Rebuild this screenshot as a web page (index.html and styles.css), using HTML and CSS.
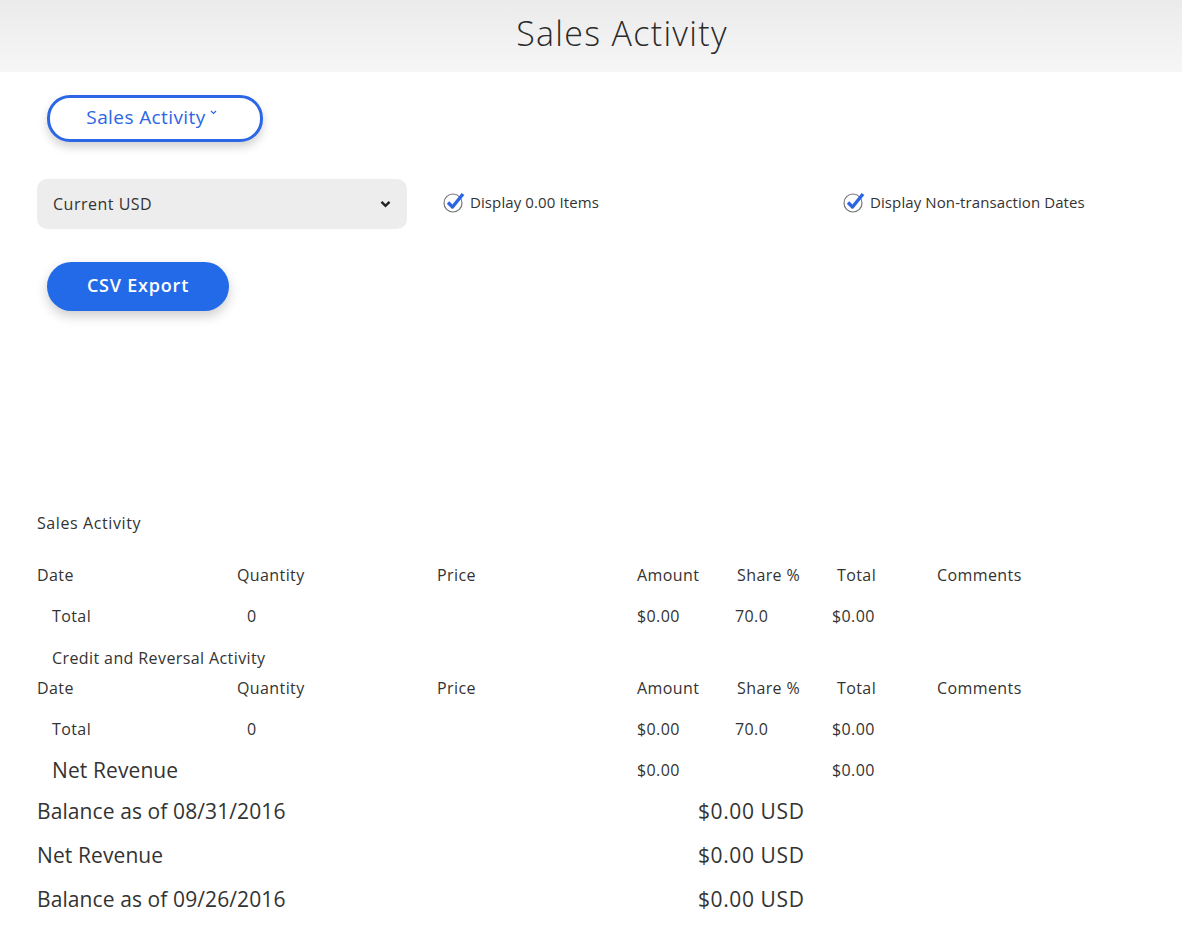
FILE: index.html
```html
<!DOCTYPE html>
<html>
<head>
<meta charset="utf-8">
<link rel="stylesheet" href="styles.css">
</head>
<body>
<header class="topbar"><h1 class="title">Sales Activity</h1></header>
<main class="content">
  <button class="view-btn">Sales Activity <svg class="caret" width="7" height="5" viewBox="0 0 7 5"><path d="M1 1l2.5 2.5L6 1" fill="none" stroke="#2a66e6" stroke-width="1.2"/></svg></button>
  <div class="controls">
    <div class="select"><span>Current USD</span><svg width="11" height="8" viewBox="0 0 11 8"><path d="M1.5 1.8l4 4 4-4" fill="none" stroke="#222" stroke-width="2.4"/></svg></div>
    <label class="check"><svg width="26" height="22" viewBox="0 0 26 22"><circle cx="11" cy="12" r="9" fill="#fff" stroke="#777" stroke-width="1.2"/><path d="M6 11.5l4.5 4.5L21 3" fill="none" stroke="#2a66e6" stroke-width="3.4" stroke-linejoin="round"/></svg><span>Display 0.00 Items</span></label>
    <label class="check"><svg width="26" height="22" viewBox="0 0 26 22"><circle cx="11" cy="12" r="9" fill="#fff" stroke="#777" stroke-width="1.2"/><path d="M6 11.5l4.5 4.5L21 3" fill="none" stroke="#2a66e6" stroke-width="3.4" stroke-linejoin="round"/></svg><span>Display Non-transaction Dates</span></label>
  </div>
  <button class="csv-btn">CSV Export</button>

  <section class="report">
    <div class="section-label">Sales Activity</div>
    <div class="row head first-head">
      <span>Date</span><span>Quantity</span><span>Price</span><span>Amount</span><span>Share %</span><span>Total</span><span>Comments</span>
    </div>
    <div class="row total">
      <span class="ind">Total</span><span class="qty">0</span><span></span><span>$0.00</span><span class="share">70.0</span><span class="tot">$0.00</span><span></span>
    </div>
    <div class="sub-label">Credit and Reversal Activity</div>
    <div class="row head">
      <span>Date</span><span>Quantity</span><span>Price</span><span>Amount</span><span>Share %</span><span>Total</span><span>Comments</span>
    </div>
    <div class="row total second-total">
      <span class="ind">Total</span><span class="qty">0</span><span></span><span>$0.00</span><span class="share">70.0</span><span class="tot">$0.00</span><span></span>
    </div>
    <div class="row net">
      <span class="ind net-label">Net Revenue</span><span></span><span></span><span>$0.00</span><span></span><span class="tot">$0.00</span><span></span>
    </div>
    <div class="balance"><span>Balance as of 08/31/2016</span><span class="usd">$0.00 USD</span></div>
    <div class="balance"><span>Net Revenue</span><span class="usd">$0.00 USD</span></div>
    <div class="balance"><span>Balance as of 09/26/2016</span><span class="usd">$0.00 USD</span></div>
  </section>
</main>
</body>
</html>
```
FILE: styles.css
```css
* { box-sizing: border-box; }
body {
  margin: 0;
  font-family: "Open Sans", "Lato", sans-serif;
  color: #333;
  background: #fff;
}
.topbar {
  height: 72px;
  background: linear-gradient(#ebebeb, #f6f6f6);
  display: flex;
  justify-content: center;
  align-items: center;
  padding-left: 62px;
}
.title {
  margin: 0 0 6px;
  font-weight: 300;
  font-size: 34px;
  color: #2b2b2b;
  letter-spacing: 1.3px;
}
.content {
  padding: 23px 0 0 37px;
}
.view-btn {
  margin-left: 10px;
  width: 216px;
  height: 47px;
  border: 3px solid #2a66e6;
  border-radius: 23px;
  background: #fff;
  color: #2a66e6;
  font-family: inherit;
  font-size: 19px;
  letter-spacing: 0.4px;
  box-shadow: 0 5px 10px rgba(0,0,0,0.18);
  display: flex;
  align-items: center;
  justify-content: center;
  gap: 4px;
  padding: 0 7px 4px 0;
}
.caret { margin-bottom: 8px; }
.controls {
  margin-top: 37px;
  display: grid;
  grid-template-columns: 370px 365px auto;
  column-gap: 35px;
  align-items: center;
}
.select {
  height: 50px;
  background: #ededed;
  border-radius: 10px;
  display: flex;
  align-items: center;
  justify-content: space-between;
  padding: 0 16px 0 16px;
  font-size: 16px;
  letter-spacing: 0.5px;
  color: #333;
}
.check {
  display: flex;
  align-items: center;
  gap: 2px;
  font-size: 15px;
  letter-spacing: 0.1px;
  color: #333;
  margin-top: -4px;
}
.csv-btn {
  margin: 33px 0 0 10px;
  width: 182px;
  height: 49px;
  border: none;
  border-radius: 25px;
  background: #236ae9;
  color: #fff;
  font-family: inherit;
  font-size: 18px;
  font-weight: 600;
  letter-spacing: 0.8px;
  box-shadow: 0 5px 12px rgba(0,0,0,0.2);
  padding: 0 0 4px;
}
.report {
  margin-top: 197px;
  color: #333;
  font-size: 16px;
  letter-spacing: 0.4px;
}
.section-label {
  height: 30px;
  line-height: 30px;
  letter-spacing: 0.6px;
}
.row {
  display: grid;
  grid-template-columns: 200px 200px 200px 100px 100px 100px auto;
  align-items: center;
}
.head { height: 30px; }
.first-head { margin-top: 22px; }
.total { height: 40px; margin-top: 6px; }
.ind { padding-left: 15px; }
.qty { padding-left: 10px; }
.share { margin-left: -2px; }
.tot { margin-left: -5px; }
.sub-label {
  margin-top: 7px;
  height: 30px;
  line-height: 30px;
  padding-left: 15px;
}
.second-total { margin-top: 6px; }
.net { height: 38px; margin-top: 2px; }
.net-label { font-size: 21px; letter-spacing: 0.1px; }
.balance {
  height: 44px;
  display: grid;
  grid-template-columns: 661px auto;
  align-items: center;
  font-size: 21px;
  letter-spacing: 0.1px;
}
.usd { letter-spacing: 0.6px; }
```
